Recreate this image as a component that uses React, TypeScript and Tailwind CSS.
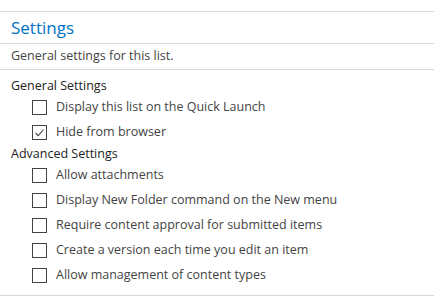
import React, { useState } from 'react';

const general = [
  { label: 'Display this list on the Quick Launch', checked: false },
  { label: 'Hide from browser', checked: true },
];

const advanced = [
  'Allow attachments',
  'Display New Folder command on the New menu',
  'Require content approval for submitted items',
  'Create a version each time you edit an item',
  'Allow management of content types',
];

function Check({ label, initial }: { label: string; initial: boolean }) {
  const [on, setOn] = useState(initial);
  return (
    <label className="flex items-center h-[25px] pl-[32px] cursor-pointer">
      <span
        onClick={() => setOn(!on)}
        className="w-[15px] h-[15px] border border-[#444] bg-white flex items-center justify-center shrink-0"
      >
        {on && (
          <svg width="11" height="11" viewBox="0 0 11 11" fill="none">
            <path d="M1.5 6 L4.2 8.7 L9.5 2.5" stroke="#444" strokeWidth="1.1" />
          </svg>
        )}
      </span>
      <span className="ml-[9px] text-[12.5px] text-[#444]">{label}</span>
    </label>
  );
}

export default function App() {
  return (
    <div
      className="w-[434px] h-[296px] bg-white pt-[11px]"
      style={{ fontFamily: '"Open Sans", "Noto Sans", sans-serif' }}
    >
      <div className="border-t border-[#d5d5dc] h-[32px] flex items-center px-[11px]">
        <h1 className="text-[17px] text-[#0072c6] leading-none">Settings</h1>
      </div>
      <div className="border-t border-[#d5d5dc] h-[26px] flex items-center px-[11px]">
        <p className="text-[12.5px] text-[#444]">General settings for this list.</p>
      </div>
      <div className="border-t border-[#d5d5dc] h-[226px] pt-[7px]">
        <div className="px-[11px] text-[12.5px] text-[#222] h-[18px] leading-[18px]">General Settings</div>
        {general.map((g) => (
          <Check key={g.label} label={g.label} initial={g.checked} />
        ))}
        <div className="px-[11px] text-[12.5px] text-[#222] h-[18px] leading-[18px]">Advanced Settings</div>
        {advanced.map((a) => (
          <Check key={a} label={a} initial={false} />
        ))}
      </div>
      <div className="border-t border-[#d5d5dc]" />
    </div>
  );
}
